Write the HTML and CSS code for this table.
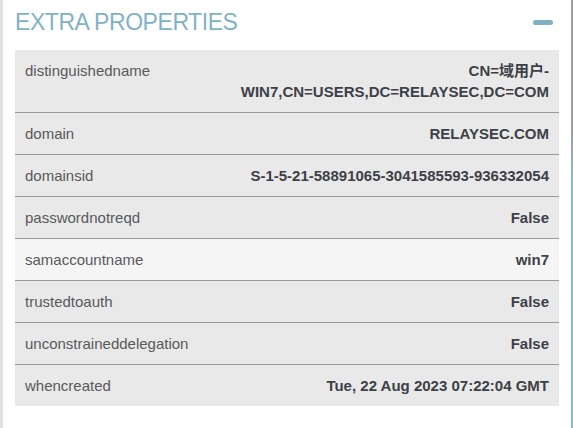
FILE: index.html
```html
<!DOCTYPE html>
<html>
<head>
<meta charset="utf-8">
<link rel="stylesheet" href="styles.css">
</head>
<body>
<div class="panel">
  <div class="panel-head">
    <h2 class="panel-title">EXTRA PROPERTIES</h2>
    <span class="collapse"></span>
  </div>
  <div class="props">
    <div class="row top"><div class="key">distinguishedname</div><div class="val">CN=域用户-WIN7,CN=USERS,DC=RELAYSEC,DC=COM</div></div>
    <div class="row"><div class="key">domain</div><div class="val">RELAYSEC.COM</div></div>
    <div class="row"><div class="key">domainsid</div><div class="val">S-1-5-21-58891065-3041585593-936332054</div></div>
    <div class="row"><div class="key">passwordnotreqd</div><div class="val">False</div></div>
    <div class="row light"><div class="key">samaccountname</div><div class="val">win7</div></div>
    <div class="row"><div class="key">trustedtoauth</div><div class="val">False</div></div>
    <div class="row"><div class="key">unconstraineddelegation</div><div class="val">False</div></div>
    <div class="row last"><div class="key">whencreated</div><div class="val">Tue, 22 Aug 2023 07:22:04 GMT</div></div>
  </div>
</div>
</body>
</html>
```
FILE: styles.css
```css
html, body {
  margin: 0;
  padding: 0;
  background: #ffffff;
}
body {
  font-family: "Liberation Sans", Arial, "Noto Sans CJK SC", sans-serif;
  width: 573px;
  height: 428px;
  overflow: hidden;
}
.panel {
  box-sizing: border-box;
  width: 573px;
  height: 428px;
  border-left: 3px solid #dfe3e8;
  padding: 0 14px 0 12px;
  background:
    linear-gradient(to bottom, #9c9c9c 0, #9c9c9c 30%, #8bbcc4 42%, #8bbcc4 100%) right top / 2px 100% no-repeat,
    #ffffff;
}
.panel-head {
  height: 50px;
  display: flex;
  align-items: center;
  justify-content: space-between;
}
.panel-title {
  margin: 0;
  font-weight: normal;
  font-size: 23px;
  letter-spacing: -0.45px;
  color: #7fb2c7;
  padding-bottom: 6px;
}
.collapse {
  width: 20px;
  height: 5px;
  border-radius: 3px;
  background: #7fb0c6;
  margin-right: 6px;
  margin-bottom: 6px;
}
.props {
  display: flex;
  flex-direction: column;
}
.row {
  display: grid;
  grid-template-columns: 200px 1fr;
  align-items: center;
  background: #e9e9e9;
  border-bottom: 1px solid #999;
  padding: 10px 10px;
  font-size: 15px;
  line-height: 21px;
}
.row.top {
  align-items: start;
}
.row.light {
  background: #f5f5f5;
}
.row.last {
  border-bottom: none;
}
.key {
  color: #58595b;
}
.val {
  color: #3d4147;
  font-weight: bold;
  text-align: right;
}
```
